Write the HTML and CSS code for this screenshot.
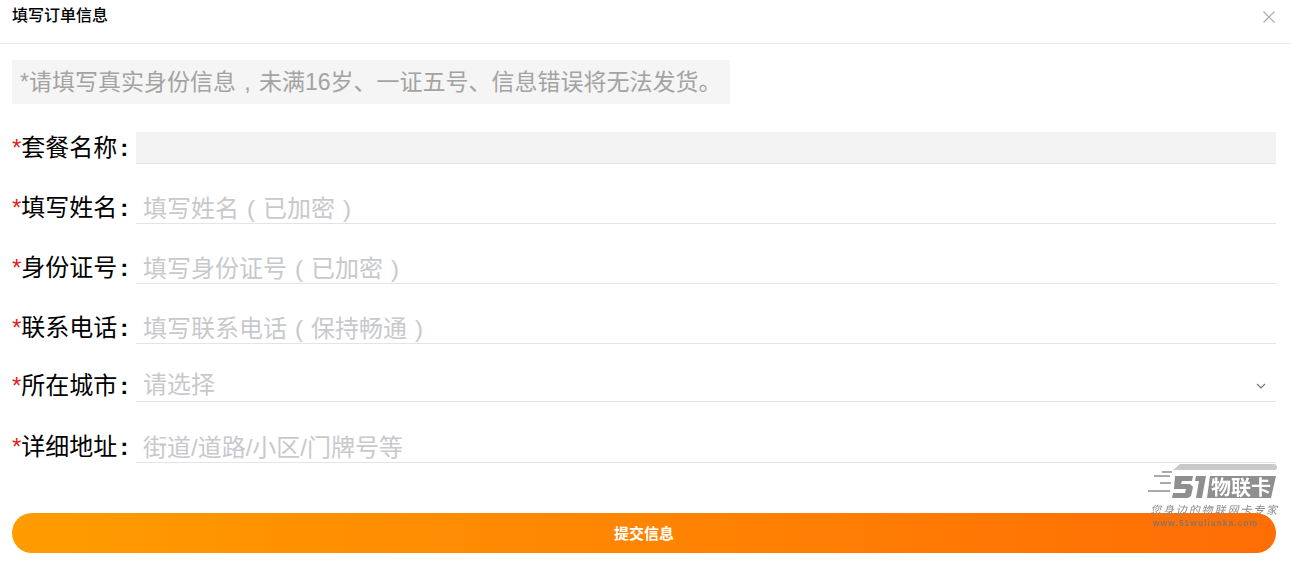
FILE: index.html
```html
<!DOCTYPE html>
<html lang="zh-CN">
<head>
  <meta charset="UTF-8" />
  <meta name="viewport" content="width=device-width, initial-scale=1.0"/>
  <title>填写订单信息</title>
  <link rel="stylesheet" href="styles.css">
</head>
<body>
  <div class="header">
    <h2>填写订单信息</h2>
    <svg class="close-icon" width="14" height="14" viewBox="0 0 14 14" aria-label="关闭">
      <path d="M1.5 1.5 L12.5 12.5 M12.5 1.5 L1.5 12.5" />
    </svg>
  </div>

  <form class="order-form">
    <div class="notice">*请填写真实身份信息<span class="comma">,</span>未满16岁、一证五号、信息错误将无法发货。</div>

    <div class="form-row">
      <label><span class="star">*</span>套餐名称<span class="colon">:</span></label>
      <div class="field field-disabled"></div>
    </div>

    <div class="form-row">
      <label><span class="star">*</span>填写姓名<span class="colon">:</span></label>
      <div class="field"><input type="text" placeholder="填写姓名 ( 已加密 )" /></div>
    </div>

    <div class="form-row">
      <label><span class="star">*</span>身份证号<span class="colon">:</span></label>
      <div class="field"><input type="text" placeholder="填写身份证号 ( 已加密 )" /></div>
    </div>

    <div class="form-row">
      <label><span class="star">*</span>联系电话<span class="colon">:</span></label>
      <div class="field"><input type="text" placeholder="填写联系电话 ( 保持畅通 )" /></div>
    </div>

    <div class="form-row row-select">
      <label><span class="star">*</span>所在城市<span class="colon">:</span></label>
      <div class="field">
        <span class="select-text">请选择</span>
        <svg class="arrow-icon" width="10" height="6" viewBox="0 0 10 6">
          <path d="M1 1 L5 5 L9 1" />
        </svg>
      </div>
    </div>

    <div class="form-row row-address">
      <label><span class="star">*</span>详细地址<span class="colon">:</span></label>
      <div class="field"><input type="text" placeholder="街道/道路/小区/门牌号等" /></div>
    </div>

    <button type="button" class="submit-btn"><span>提交信息</span></button>
  </form>

  <div class="watermark">
    <svg width="134" height="40" viewBox="0 0 134 40">
      <path class="wm-top" d="M34 1 H127 Q131 1 131 4 V5 Q131 7 127 7 H27 Z" />
      <path class="wm-dash" d="M16 9 H26 M2 28 H24 M14 20 H25 M8 13 H24" />
      <path class="wm-five" d="M29 13 H47 L46 18 H36 L35 21 H44 L47 24 L45 33 L42 35 H26 L27 30 H39 L40 26 H28 Z" />
      <path class="wm-one" d="M50 13 H60 L56 35 H50 L53 18 H49 Z" />
      <path class="wm-plate" d="M64 13 H130 L125 35 H61 Z" />
      <text class="wm-name" x="65" y="32">物联卡</text>
    </svg>
    <div class="wm-slogan">您身边的物联网卡专家</div>
    <div class="wm-url">www.51wulianka.com</div>
  </div>
</body>
</html>
```

FILE: styles.css
```css
* {
  margin: 0;
  padding: 0;
  box-sizing: border-box;
}

body {
  font-family: "Liberation Sans", "Noto Sans CJK SC", sans-serif;
  background: #fff;
  color: #000;
  position: relative;
  overflow: hidden;
}

.header {
  height: 44px;
  padding: 0 15px 0 12px;
  display: flex;
  justify-content: space-between;
  align-items: center;
  border-bottom: 1px solid #ebebeb;
}

.header h2 {
  font-size: 16px;
  font-weight: 500;
  line-height: 22px;
  margin-top: -11px;
}

.close-icon {
  margin-top: -9px;
}

.close-icon path {
  fill: none;
  stroke: #aaa;
  stroke-width: 1.2;
}

.order-form {
  padding: 16px 15px 0 12px;
}

.notice {
  width: 718px;
  height: 44px;
  padding-left: 8px;
  background: #f5f5f5;
  color: #a3a3a3;
  font-size: 23px;
  line-height: 44px;
  white-space: nowrap;
}

.comma {
  display: inline-block;
  width: 23px;
  text-align: center;
}

.form-row {
  display: flex;
  align-items: stretch;
  margin-top: 28px;
  height: 32px;
}

.row-select {
  margin-top: 26px;
}

.row-address {
  margin-top: 29px;
}

.form-row label {
  width: 124px;
  flex: none;
  font-size: 24px;
  line-height: 32px;
  white-space: nowrap;
}

.star {
  color: #e2231a;
}

.colon {
  margin-left: 3px;
  font-weight: 700;
}

.field {
  flex: 1;
  display: flex;
  align-items: center;
  justify-content: space-between;
  border-bottom: 1px solid #e4e4e4;
}

.field-disabled {
  background: #f3f3f3;
}

.field input {
  width: 100%;
  height: 100%;
  padding: 2px 7px 0;
  border: none;
  outline: none;
  background: transparent;
  font-family: inherit;
  font-size: 24px;
  word-spacing: 1.3px;
}

.field input::placeholder,
.select-text {
  color: #c8c9cc;
  opacity: 1;
}

.select-text {
  padding-left: 7px;
  font-size: 24px;
  line-height: 30px;
  margin-top: -2px;
}

.arrow-icon {
  margin-right: 10px;
}

.arrow-icon path {
  fill: none;
  stroke: #777;
  stroke-width: 1.2;
}

.submit-btn {
  display: block;
  width: 100%;
  height: 40px;
  margin-top: 50px;
  padding-bottom: 2px;
  border: none;
  border-radius: 20px;
  background: linear-gradient(90deg, #ff9c00, #ff6d05);
  color: #fff;
  font-family: inherit;
  font-size: 15px;
  font-weight: 700;
}

/* site watermark, sits over the form corner */
.watermark {
  position: absolute;
  left: 1146px;
  top: 463px;
  width: 134px;
  filter: blur(0.5px);
}

.watermark svg {
  display: block;
}

.wm-top {
  fill: #c9c9c9;
}

.wm-dash {
  fill: none;
  stroke: #8f8f8f;
  stroke-width: 1.6;
}

.wm-five, .wm-one, .wm-plate {
  fill: #8f8f8f;
}

.wm-name {
  fill: #fff;
  font-size: 20px;
  font-weight: 700;
}

.wm-slogan {
  padding-left: 4px;
  color: #8c8c8c;
  font-size: 11px;
  font-style: italic;
  line-height: 14px;
  letter-spacing: 1.9px;
  white-space: nowrap;
}

.wm-url {
  padding-left: 7px;
  color: rgba(130, 115, 105, 0.95);
  font-size: 8.5px;
  font-weight: 700;
  line-height: 12px;
  letter-spacing: 1px;
  white-space: nowrap;
}
```
